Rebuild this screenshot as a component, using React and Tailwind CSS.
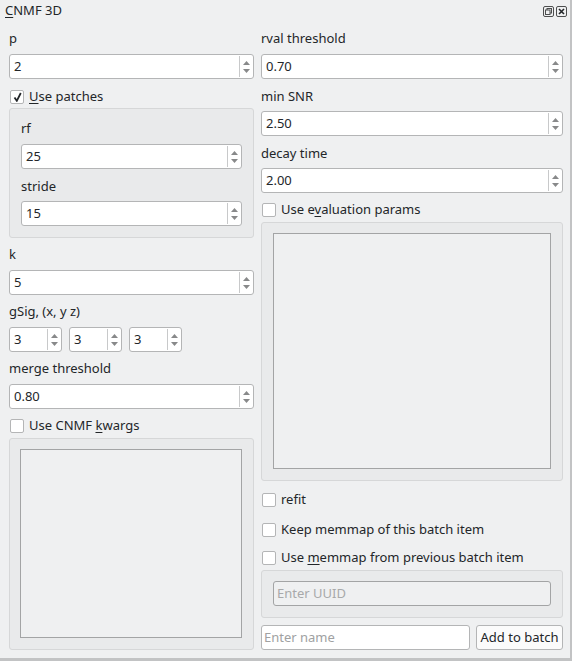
import React from "react";

const font = { fontFamily: '"Noto Sans", "DejaVu Sans", sans-serif' };

const SpinBox = ({ value, className = "" }) => (
  <div
    className={`flex h-[25px] bg-white border border-[#b4b5b6] rounded-[3px] ${className}`}
  >
    <div className="flex-1 flex items-center pl-[4px] text-[13px] text-[#232629] overflow-hidden">
      {value}
    </div>
    <div className="w-[14px] flex flex-col items-center justify-center gap-[4px] border-l border-[#c8c9ca] my-[1px]">
      <svg width="7" height="4" viewBox="0 0 7 4">
        <polygon points="0,4 3.5,0 7,4" fill="#88898a" />
      </svg>
      <svg width="7" height="4" viewBox="0 0 7 4">
        <polygon points="0,0 7,0 3.5,4" fill="#88898a" />
      </svg>
    </div>
  </div>
);

const Label = ({ children }) => (
  <div className="h-[18px] flex items-center text-[13px] text-[#232629] leading-none">
    {children}
  </div>
);

const CheckRow = ({ checked, children }) => (
  <div className="h-[18px] flex items-center gap-[5px] text-[13px] text-[#232629]">
    <div className="w-[14px] h-[14px] bg-white border border-[#b4b5b6] rounded-[2px] flex items-center justify-center ml-[1px]">
      {checked && (
        <svg width="9" height="10" viewBox="0 0 9 10">
          <path d="M1.5 5.5 L3.8 8.8 L7.8 1" stroke="#232629" strokeWidth="1.8" fill="none" />
        </svg>
      )}
    </div>
    <span>{children}</span>
  </div>
);

const Group = ({ children, className = "" }) => (
  <div className={`bg-[#e9eaeb] border border-[#d6d7d8] rounded-[3px] ${className}`}>
    {children}
  </div>
);

const TextArea = ({ className = "" }) => (
  <div className={`bg-[#eff0f1] border border-[#a3a4a5] ${className}`} />
);

export default function App() {
  return (
    <div className="w-[572px] h-[661px] bg-[#eff0f1] flex flex-col border-r-[2px] border-b-[3px] border-[#c2c3c4]" style={font}>
      {/* title bar */}
      <div className="h-[22px] flex items-center justify-between pl-[5px] pr-[3px] text-[13px] text-[#232629]">
        <span>
          <span className="underline underline-offset-2">C</span>NMF 3D
        </span>
        <div className="flex gap-[2px]">
          <svg width="11" height="11" viewBox="0 0 11 11">
            <rect x="0.5" y="0.5" width="10" height="10" rx="1.5" fill="none" stroke="#4d4e4f" />
            <rect x="4" y="2.5" width="4.5" height="4.5" fill="none" stroke="#4d4e4f" />
            <rect x="2.5" y="4" width="4.5" height="4.5" fill="#eff0f1" stroke="#4d4e4f" />
          </svg>
          <svg width="11" height="11" viewBox="0 0 11 11">
            <rect x="0.5" y="0.5" width="10" height="10" rx="1.5" fill="none" stroke="#4d4e4f" />
            <path d="M3 3 L8 8 M8 3 L3 8" stroke="#232629" strokeWidth="1.6" />
          </svg>
        </div>
      </div>

      <div className="flex gap-[7px] pl-[9px] pt-[7px]">
        {/* left column */}
        <div className="w-[245px] flex flex-col">
          <Label>p</Label>
          <SpinBox value="2" className="mt-[7px]" />
          <div className="mt-[9px]">
            <CheckRow checked>
              <span className="underline underline-offset-2">U</span>se patches
            </CheckRow>
          </div>
          <Group className="mt-[2px] h-[130px] pt-[10px] pl-[11px] pr-[11px]">
            <Label>rf</Label>
            <SpinBox value="25" className="mt-[7px]" />
            <div className="mt-[8px]">
              <Label>stride</Label>
            </div>
            <SpinBox value="15" className="mt-[6px]" />
          </Group>
          <div className="mt-[7px]">
            <Label>k</Label>
          </div>
          <SpinBox value="5" className="mt-[7px]" />
          <div className="mt-[7px]">
            <Label>gSig, (x, y z)</Label>
          </div>
          <div className="flex gap-[7px] mt-[7px]">
            <SpinBox value="3" className="w-[53px]" />
            <SpinBox value="3" className="w-[53px]" />
            <SpinBox value="3" className="w-[53px]" />
          </div>
          <div className="mt-[7px]">
            <Label>merge threshold</Label>
          </div>
          <SpinBox value="0.80" className="mt-[7px]" />
          <div className="mt-[8px]">
            <CheckRow>
              Use CNMF <span className="underline underline-offset-2">k</span>wargs
            </CheckRow>
          </div>
          <Group className="mt-[3px] h-[212px] pt-[10px] pl-[10px] pr-[11px] pb-[11px] flex">
            <TextArea className="flex-1" />
          </Group>
        </div>

        {/* right column */}
        <div className="w-[302px] flex flex-col">
          <Label>rval threshold</Label>
          <SpinBox value="0.70" className="mt-[7px]" />
          <div className="mt-[8px]">
            <Label>min SNR</Label>
          </div>
          <SpinBox value="2.50" className="mt-[6px]" />
          <div className="mt-[8px]">
            <Label>decay time</Label>
          </div>
          <SpinBox value="2.00" className="mt-[6px]" />
          <div className="mt-[8px]">
            <CheckRow>
              Use e<span className="underline underline-offset-2">v</span>aluation params
            </CheckRow>
          </div>
          <Group className="mt-[3px] h-[259px] pt-[10px] pl-[11px] pr-[11px] pb-[11px] flex">
            <TextArea className="flex-1" />
          </Group>
          <div className="mt-[10px]">
            <CheckRow>refit</CheckRow>
          </div>
          <div className="mt-[12px]">
            <CheckRow>Keep memmap of this batch item</CheckRow>
          </div>
          <div className="mt-[10px]">
            <CheckRow>
              Use <span className="underline underline-offset-2">m</span>emmap from previous batch item
            </CheckRow>
          </div>
          <Group className="mt-[3px] h-[48px] pt-[10px] pl-[11px] pr-[11px]">
            <div className="h-[25px] bg-[#eff0f1] border border-[#a3a4a5] rounded-[3px] flex items-center pl-[3px] text-[13px] text-[#a8a9aa]">
              Enter UUID
            </div>
          </Group>
          <div className="flex gap-[6px] mt-[7px]">
            <div className="w-[209px] h-[25px] bg-white border border-[#b4b5b6] rounded-[3px] flex items-center pl-[2px] text-[13px] text-[#a0a1a2]">
              Enter name
            </div>
            <div className="flex-1 h-[25px] bg-[#fbfbfb] border border-[#b4b5b6] rounded-[3px] flex items-center justify-center text-[13px] text-[#232629]">
              Add to batch
            </div>
          </div>
        </div>
      </div>
    </div>
  );
}
